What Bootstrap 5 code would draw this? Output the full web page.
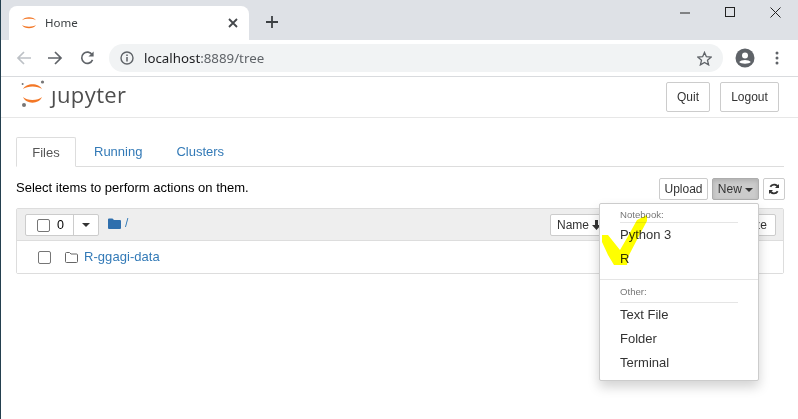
<!DOCTYPE html>
<html lang="en">
<head>
<meta charset="utf-8">
<title>Home</title>
<link href="https://cdn.jsdelivr.net/npm/bootstrap@5.3.0/dist/css/bootstrap.min.css" rel="stylesheet">
<style>
html,body{height:100%;overflow:hidden}
body{font-family:"Liberation Sans",Arial,sans-serif;font-size:13px;color:#000;background:#fff;border-left:1px solid #24404f;line-height:18px}
.tabstrip{height:40px;background:#dee1e6;padding:6px 0 0 8px}
.ctab{width:240px;height:34px;background:#fff;border-radius:8px 8px 0 0;padding:0 11px 0 12px;font-family:"Noto Sans",sans-serif;font-size:11.5px;color:#3c4043}
.tabname{margin-left:8px}
.plus{margin-left:16px;margin-top:-6px}
.winctl{margin-left:auto;margin-top:-6px;height:24px}
.winbtn{width:45px;height:24px}
.addr{height:37px;border-bottom:1px solid #d9dbde;padding:4px 0}
.ic-back{margin-left:15px}.ic-fwd{margin-left:17px}.ic-rel{margin-left:17px}
.omni{width:614px;height:28px;background:#f1f3f4;border-radius:14px;margin-left:14px;padding:0 11px;font-family:"Noto Sans",sans-serif;font-size:13.3px;color:#202124}
.omni .dim{color:#5f6368}
.urltext{margin-left:10px}
.ic-acct{margin-left:12px}.ic-dots{margin-left:20px}
.hdr{height:41px;border-bottom:1px solid #e7e7e7;padding:0 19px 0 20px}
.jlogo{font-family:"Open Sans",sans-serif;font-size:22px;color:#4e4e4e;letter-spacing:.4px;line-height:28px;margin-left:6px;margin-top:-6px}
.jmark{margin-top:-6px}
.sqbtn{font-size:12px;background:#fff;border:1px solid #ccc;color:#333;border-radius:2px;padding:0;line-height:26px;height:30px}
.q1{width:44px}.q2{width:59px;margin-left:10px}
.pagebody{padding:19px 13px 0 15px;position:relative}
.jtabs{border-bottom:1px solid #ddd;height:30px;gap:2px;margin-right:1px}
.jtab{font-size:13px;color:#337ab7;padding:0 16px;line-height:30px;height:30px}
.jtab.on{color:#555;border:1px solid #ddd;border-bottom-color:#fff;border-radius:2px 2px 0 0;background:#fff;line-height:29px;width:60px;padding:0;text-align:center}
.toolrow{height:41px;padding-top:11px;align-items:flex-start}
.sel{font-size:13px;line-height:20px}
.minibtn{height:22px;font-size:12px;background:#fff;border:1px solid #ccc;color:#333;border-radius:2px;padding:0;line-height:20px;white-space:nowrap}
.minibtn.up{width:49px}
.minibtn.act{background:#cbcbcb;border-color:#adadad;box-shadow:inset 0 2px 4px rgba(0,0,0,.13);margin-left:4px;width:47px}
.minibtn.ref{width:22px;margin-left:4px}
.caretd{display:inline-block;border-top:4px solid #333;border-left:4px solid transparent;border-right:4px solid transparent;vertical-align:middle}
.listbox{border:1px solid #ddd;border-radius:2px;margin-right:1px}
.listhead{height:32px;background:#eee;border-bottom:1px solid #ddd;padding:5px 7px 0 8px}
.chkgroup{width:74px;height:22px;border:1px solid #ccc;background:#fff;border-radius:2px}
.chkgroup .leftpart{width:48px;border-right:1px solid #ccc;height:20px;padding-left:11px;gap:7px;font-size:12.5px}
.fakechk{width:13px;height:13px;border:1px solid #767676;border-radius:2px;background:#fff;display:inline-block;flex-shrink:0}
.crumb{margin-left:9px;gap:4px;color:#337ab7;font-size:12px;margin-top:-8px}
.namebtn{height:22px;font-size:12px;background:#fff;border:1px solid #ccc;border-radius:2px;padding:0 6px;line-height:20px;color:#333;white-space:nowrap}
.nm{width:57px;margin-left:auto;margin-right:109px;text-align:left}
.sz{width:60px;text-align:right;padding-right:9px}
.arrowd{margin-left:3px;vertical-align:-1px}
.listrow{height:32px;padding-left:21px;background:#fff}
.ic-rowf{margin-left:14px}
.listrow a{color:#337ab7;text-decoration:none;font-size:13px;margin-left:6px;margin-top:-1px;letter-spacing:.05px}
.popmenu{position:absolute;left:598px;top:85px;width:160px;height:178px;background:#fff;border:1px solid #ccc;border-radius:2px;box-shadow:0 6px 12px rgba(0,0,0,.175);z-index:5;padding-top:2px}
.mhead{font-size:9.6px;color:#777;margin:0 20px;height:17px;line-height:17px;border-bottom:1px solid #e5e5e5}
.mhead.tall{height:20px}
.mitem{font-size:13px;color:#333;padding:0 20px;height:24px;line-height:24px}
.msep{height:1px;background:#e5e5e5;margin:8px 0 3px}
.mark-check{position:absolute;left:600px;top:212px;z-index:6;mix-blend-mode:multiply}
</style>
</head>
<body>
<div class="tabstrip d-flex align-items-start">
  <div class="ctab d-flex align-items-center">
    <svg width="16" height="16" viewBox="0 0 16 16"><path d="M1 5.2C3.5 1.2 12.5 1.2 15 5.2C11.5 3.3 4.5 3.3 1 5.2Z" fill="#f37726"/><path d="M1 10C3.5 14.4 12.5 14.4 15 10C11.5 12.2 4.5 12.2 1 10Z" fill="#f37726"/></svg>
    <span class="tabname">Home</span>
    <svg class="ms-auto" width="10" height="10" viewBox="0 0 10 10"><path d="M1 1L9 9M9 1L1 9" stroke="#45484c" stroke-width="1.8"/></svg>
  </div>
  <svg class="plus" width="14" height="34" viewBox="0 0 14 34"><path d="M7 11V23M1 17H13" stroke="#3c4043" stroke-width="1.8" transform="translate(0 5)"/></svg>
  <div class="winctl d-flex">
    <div class="winbtn d-flex align-items-center justify-content-center"><svg width="11" height="11" viewBox="0 0 11 11"><path d="M0 6H10" stroke="#222" stroke-width="1"/></svg></div>
    <div class="winbtn d-flex align-items-center justify-content-center"><svg width="11" height="11" viewBox="0 0 11 11"><rect x=".5" y=".5" width="9" height="9" fill="none" stroke="#222"/></svg></div>
    <div class="winbtn d-flex align-items-center justify-content-center"><svg width="11" height="11" viewBox="0 0 11 11"><path d="M.5.5L10.5 10.5M10.5.5L.5 10.5" stroke="#222" stroke-width="1"/></svg></div>
  </div>
</div>
<div class="addr d-flex align-items-center">
  <svg class="ic-back" width="15" height="16" viewBox="0 0 15 16"><path d="M15 8H2M8 2L2 8L8 14" fill="none" stroke="#bdc1c6" stroke-width="1.7"/></svg>
  <svg class="ic-fwd" width="15" height="16" viewBox="0 0 15 16"><path d="M0 8H13M7 2L13 8L7 14" fill="none" stroke="#5f6368" stroke-width="1.7"/></svg>
  <svg class="ic-rel" width="15" height="16" viewBox="0 0 16 16"><path d="M13.4 10A6 6 0 1 1 13 4.6" fill="none" stroke="#5f6368" stroke-width="1.7"/><path d="M14.5 1V6.5H9Z" fill="#5f6368"/></svg>
  <div class="omni d-flex align-items-center">
    <svg width="14" height="14" viewBox="0 0 14 14"><circle cx="7" cy="7" r="6" fill="none" stroke="#5f6368" stroke-width="1.4"/><path d="M7 6V10.5M7 3.4V5" stroke="#5f6368" stroke-width="1.5"/></svg>
    <span class="urltext">localhost<span class="dim">:8889/tree</span></span>
    <svg class="ms-auto" width="15" height="15" viewBox="0 0 16 16"><path d="M8 1.5L10 6.1L15 6.6L11.2 9.9L12.4 14.8L8 12.2L3.6 14.8L4.8 9.9L1 6.6L6 6.1Z" fill="none" stroke="#5f6368" stroke-width="1.4"/></svg>
  </div>
  <svg class="ic-acct" width="20" height="20" viewBox="0 0 20 20"><circle cx="10" cy="10" r="9.5" fill="#5f6368"/><circle cx="10" cy="7.5" r="3" fill="#fff"/><path d="M4.2 14C6 11.3 14 11.3 15.8 14C14 16.2 6 16.2 4.2 14Z" fill="#fff"/></svg>
  <svg class="ic-dots" width="4" height="14" viewBox="0 0 4 14"><circle cx="2" cy="2" r="1.5" fill="#5f6368"/><circle cx="2" cy="7" r="1.5" fill="#5f6368"/><circle cx="2" cy="12" r="1.5" fill="#5f6368"/></svg>
</div>
<div class="hdr d-flex align-items-center">
  <svg class="flex-shrink-0 jmark" width="24" height="30" viewBox="0 0 24 30"><path d="M2 10C5 3.5 18 3.5 21 10C17 6.5 6 6.5 2 10Z" fill="#f37726"/><path d="M2 18C5 25.5 18 25.5 21 18C17 22 6 22 2 18Z" fill="#f37726"/><circle cx="21.5" cy="3" r="1.6" fill="#767677"/><circle cx="1.6" cy="5" r="1" fill="#767677"/><circle cx="3" cy="26" r="2" fill="#767677"/></svg>
  <span class="jlogo">ȷupyter</span>
  <button class="sqbtn q1 ms-auto" type="button">Quit</button>
  <button class="sqbtn q2" type="button">Logout</button>
</div>
<div class="pagebody">
  <div class="jtabs d-flex">
    <div class="jtab on">Files</div>
    <div class="jtab">Running</div>
    <div class="jtab">Clusters</div>
  </div>
  <div class="toolrow d-flex">
    <div class="sel">Select items to perform actions on them.</div>
    <button class="minibtn up ms-auto" type="button">Upload</button>
    <button class="minibtn act" type="button">New <span class="caretd"></span></button>
    <button class="minibtn ref d-flex align-items-center justify-content-center" type="button"><svg width="12" height="12" viewBox="0 0 12 12"><path d="M10.2 4.6A4.4 4.4 0 0 0 2.3 3.8M1.8 7.4A4.4 4.4 0 0 0 9.7 8.2" fill="none" stroke="#333" stroke-width="1.8"/><path d="M11 .9V5H7ZM1 11.1V7H5Z" fill="#333"/></svg></button>
  </div>
  <div class="listbox">
    <div class="listhead d-flex">
      <div class="chkgroup d-flex">
        <div class="leftpart d-flex align-items-center"><span class="fakechk"></span><span>0</span></div>
        <div class="flex-fill d-flex align-items-center justify-content-center"><span class="caretd"></span></div>
      </div>
      <div class="crumb d-flex align-items-center">
        <svg width="13" height="11" viewBox="0 0 13 11"><path d="M0 1.5Q0 .5 1 .5H4.5L6 2H12Q13 2 13 3V10Q13 11 12 11H1Q0 11 0 10Z" fill="#2f6fad"/></svg>
        <span>/</span>
      </div>
      <button class="namebtn nm" type="button">Name<svg class="arrowd" width="9" height="10" viewBox="0 0 9 10"><path d="M3 0H6V5H9L4.5 10L0 5H3Z" fill="#333"/></svg></button>
      <button class="namebtn sz" type="button">File size</button>
    </div>
    <div class="listrow d-flex align-items-center">
      <span class="fakechk"></span>
      <svg class="ic-rowf" width="13" height="11" viewBox="0 0 13 11"><path d="M.5 1.5Q.5 .5 1.5 .5H4.5L6 2H11.5Q12.5 2 12.5 3V9.5Q12.5 10.5 11.5 10.5H1.5Q.5 10.5 .5 9.5Z" fill="none" stroke="#666"/></svg>
      <a href="#">R-ggagi-data</a>
    </div>
  </div>
  <div class="popmenu">
    <div class="mhead">Notebook:</div>
    <div class="mitem">Python 3</div>
    <div class="mitem">R</div>
    <div class="msep"></div>
    <div class="mhead tall">Other:</div>
    <div class="mitem">Text File</div>
    <div class="mitem">Folder</div>
    <div class="mitem">Terminal</div>
  </div>
</div>
<svg class="mark-check" width="50" height="56" viewBox="0 0 50 56"><path d="M2 23H8L20 38L27 26L37 8L47 3V9L40 22L28 45L27 53H14L8 43L2 30Z" fill="#ffff00"/></svg>
</body>
</html>
